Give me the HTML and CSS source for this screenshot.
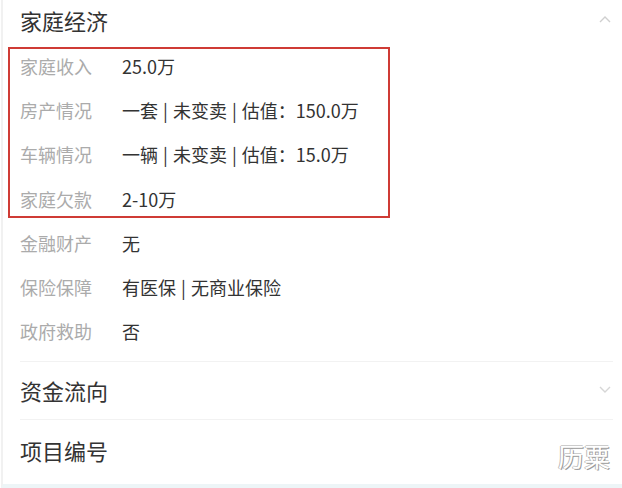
FILE: index.html
```html
<!DOCTYPE html>
<html lang="zh-CN">
<head>
  <meta charset="UTF-8" />
  <meta name="viewport" content="width=device-width, initial-scale=1.0"/>
  <title>家庭经济</title>
  <link rel="stylesheet" href="styles.css">
</head>
<body>

<div class="panel">
  <div class="sec-head first">
    <span>家庭经济</span>
    <svg class="chev" width="12" height="8" viewBox="0 0 12 8"><path d="M1 7 L6 2 L11 7" fill="none" stroke="#cfcfcf" stroke-width="1.4"/></svg>
  </div>

  <div class="marked">
    <div class="row"><span class="label">家庭收入</span><span class="value">25.0万</span></div>
    <div class="row"><span class="label">房产情况</span><span class="value">一套 | 未变卖 | 估值：150.0万</span></div>
    <div class="row"><span class="label">车辆情况</span><span class="value">一辆 | 未变卖 | 估值：15.0万</span></div>
    <div class="row"><span class="label">家庭欠款</span><span class="value">2-10万</span></div>
  </div>
  <div class="row"><span class="label">金融财产</span><span class="value">无</span></div>
  <div class="row"><span class="label">保险保障</span><span class="value">有医保 | 无商业保险</span></div>
  <div class="row"><span class="label">政府救助</span><span class="value">否</span></div>

  <div class="sec-head divided after-rows">
    <span>资金流向</span>
    <svg class="chev" width="12" height="8" viewBox="0 0 12 8"><path d="M1 1 L6 6 L11 1" fill="none" stroke="#d6d6d6" stroke-width="1.4"/></svg>
  </div>
  <div class="sec-head divided last">
    <span>项目编号</span>
  </div>

  <div class="watermark">历粟</div>
</div>

</body>
</html>
```

FILE: styles.css
```css
body {
  margin: 0;
  background-color: #fff;
  font-family: "Noto Sans CJK SC", "Noto Sans", sans-serif;
  overflow: hidden;
}

.panel {
  position: relative;
  height: 484px;
  margin-left: 1px;
  padding: 0 9px 0 17px;
  border-left: 2px solid #f1f1f1;
  border-bottom: 4px solid #edf5f7;
}

.sec-head {
  display: flex;
  align-items: center;
  justify-content: space-between;
  font-size: 22px;
  color: #333;
}

.sec-head.first {
  height: 40px;
  margin-bottom: 4px;
}

.sec-head.divided {
  height: 57px;
  border-top: 1px solid #f2f2f2;
}

.sec-head.after-rows {
  margin-top: 7.6px;
}

.sec-head.last {
  height: 60px;
}

.chev {
  margin-right: 2px;
}

.sec-head.first .chev {
  margin-top: -2px;
}

.marked {
  margin-left: -15px;
  padding-left: 15px;
  width: 373px;
  outline: 2px solid #cf3b35;
  outline-offset: -5px;
}

.row {
  display: flex;
  align-items: center;
  height: 44.2px;
  font-size: 18px;
}

.label {
  width: 102px;
  color: #ababab;
}

.value {
  color: #333;
  word-spacing: 1px;
}

.watermark {
  position: absolute;
  right: 12px;
  bottom: 10px;
  font-size: 26px;
  color: #fff;
  text-shadow: 1px 1px 0 #999, -1px 0 0 #bbb, 0 -1px 0 #ccc;
}
```
